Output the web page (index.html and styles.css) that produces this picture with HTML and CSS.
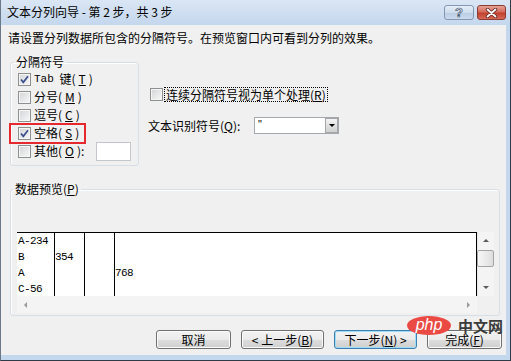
FILE: index.html
```html
<!DOCTYPE html>
<html lang="zh-CN">
<head>
    <meta charset="UTF-8">
    <meta name="viewport" content="width=device-width, initial-scale=1.0">
    <title>文本分列向导</title>
    <link rel="stylesheet" href="styles.css">
</head>
<body>

    <div class="window">
        <!-- Title bar -->
        <div class="titlebar">
            <span class="title">文本分列向导 - 第 2 步，共 3 步</span>
            <div class="caption-buttons">
                <span class="cap-btn help">?</span>
                <span class="cap-btn close">
                    <svg width="13" height="10" viewBox="0 0 13 10">
                        <path d="M2.5 1.5 L10.5 8.5 M10.5 1.5 L2.5 8.5" stroke="#5a2420" stroke-width="3.4" stroke-linecap="round" fill="none"/>
                        <path d="M2.5 1.5 L10.5 8.5 M10.5 1.5 L2.5 8.5" stroke="#fff" stroke-width="1.8" stroke-linecap="round" fill="none"/>
                    </svg>
                </span>
            </div>
        </div>

        <div class="client">
            <p class="intro">请设置分列数据所包含的分隔符号。在预览窗口内可看到分列的效果。</p>

            <div class="options">
                <fieldset class="group delimiters">
                    <legend>分隔符号</legend>
                    <div class="check-row"><span class="box checked"><svg width="11" height="11" viewBox="0 0 11 11"><path d="M2 5.5 L4.3 8.3 L9 2.3" stroke="#3b4f8d" stroke-width="1.7" fill="none"/></svg></span><span class="mono">Tab</span>&nbsp;键(<u>T</u>)</div>
                    <div class="check-row"><span class="box"></span>分号(<u>M</u>)</div>
                    <div class="check-row"><span class="box"></span>逗号(<u>C</u>)</div>
                    <div class="check-row highlight"><span class="box checked"><svg width="11" height="11" viewBox="0 0 11 11"><path d="M2 5.5 L4.3 8.3 L9 2.3" stroke="#3b4f8d" stroke-width="1.7" fill="none"/></svg></span>空格(<u>S</u>)</div>
                    <div class="check-row"><span class="box"></span>其他(<u>O</u>):<span class="other-input"></span></div>
                </fieldset>

                <div class="side">
                    <div class="check-row"><span class="box"></span><span class="focus">连续分隔符号视为单个处理(<u>R</u>)</span></div>
                    <div class="qualifier">
                        <span class="qualifier-label">文本识别符号(<u>Q</u>):</span>
                        <div class="combo">
                            <span class="combo-value">"</span>
                            <span class="combo-btn"><span class="tri-down"></span></span>
                        </div>
                    </div>
                </div>
            </div>

            <fieldset class="group preview-group">
                <legend>数据预览(<u>P</u>)</legend>
                <div class="preview">
                    <div class="data">
                        <div class="col c1"><div>A-234</div><div>B</div><div>A</div><div>C-56</div></div>
                        <div class="col c2"><div>&nbsp;</div><div>354</div></div>
                        <div class="col c3"></div>
                        <div class="col c4"><div>&nbsp;</div><div>&nbsp;</div><div>768</div></div>
                    </div>
                    <div class="vscroll">
                        <span class="arrow-btn"><span class="tri-up small"></span></span>
                        <span class="thumb"></span>
                        <span class="spacer"></span>
                        <span class="arrow-btn"><span class="tri-down small"></span></span>
                    </div>
                    <div class="hscroll">
                        <span class="arrow-btn"><span class="tri-left"></span></span>
                        <span class="arrow-btn"><span class="tri-right"></span></span>
                    </div>
                    <div class="corner"></div>
                </div>
            </fieldset>

            <div class="buttons">
                <button class="btn narrow">取消</button>
                <button class="btn wide">&lt; 上一步(<u>B</u>)</button>
                <button class="btn wide default">下一步(<u>N</u>) &gt;</button>
                <button class="btn narrow">完成(<u>F</u>)</button>
            </div>
        </div>

        <!-- Site watermark over the dialog -->
        <div class="watermark">
            <span class="wm-logo">php</span>
            <span class="wm-text">中文网</span>
        </div>
    </div>

</body>
</html>
```

FILE: styles.css
```css
/* Page */
body {
    margin: 0;
    background: #fff;
    font-family: "Noto Sans CJK SC", "Liberation Sans", sans-serif;
    font-size: 12px;
    color: #000;
}

/* Dialog frame */
.window {
    position: relative;
    width: 511px;
    height: 361px;
    box-sizing: border-box;
    display: flex;
    flex-direction: column;
    background: #c3d7ed;
    border-left: 1px solid #6a7888;
    border-right: 1px solid #2f3b47;
    border-bottom: 1px solid #2f3b47;
    padding: 0 4px 5px 0;
}

/* Title bar */
.titlebar {
    height: 25px;
    flex: none;
    display: flex;
    align-items: flex-start;
    margin-right: -4px;
    padding-left: 6px;
    background: linear-gradient(#dae6f4, #c4d7ed);
}

.title {
    margin-top: 5px;
    line-height: 14px;
}

.caption-buttons {
    margin-left: auto;
    margin-top: 5px;
    padding-right: 4px;
    display: flex;
    gap: 3px;
}

.cap-btn {
    height: 15px;
    box-sizing: border-box;
    border-radius: 3px;
    display: flex;
    align-items: center;
    justify-content: center;
}

.help {
    width: 30px;
    border: 1px solid #8497b0;
    background: linear-gradient(#e6eef8, #cddcee 50%, #b9cbe3 51%, #cbdaee);
    font-family: "Liberation Sans", sans-serif;
    font-weight: bold;
    font-size: 13px;
    color: #eef3f9;
    -webkit-text-stroke: 0.7px #3f5068;
}

.close {
    width: 29px;
    border: 1px solid #8b3b34;
    background: linear-gradient(#e7a395, #d46b5c 45%, #c2402f 55%, #d66a55);
}

/* Client area */
.client {
    flex: 1;
    display: flex;
    flex-direction: column;
    background: #f0f0f0;
    padding: 0 4px 0 7px;
}

.intro {
    margin: 6px 0 0;
    line-height: 14px;
}

.options {
    display: flex;
    align-items: flex-start;
    margin-top: 10px;
}

/* Group boxes */
.group {
    margin: 0 0 0 2px;
    border: 1px solid #d5dfe5;
    border-radius: 3px;
    box-shadow: inset 1px 1px 0 #fff;
    min-width: 0;
}

.group legend {
    padding: 0 2px;
    margin-left: -4px;
    line-height: 14px;
}

.delimiters {
    width: 129px;
    box-sizing: border-box;
    padding: 1px 7px 5px 7px;
}

/* Checkbox rows */
.check-row {
    position: relative;
    display: flex;
    align-items: center;
    gap: 3px;
    height: 18px;
    line-height: 14px;
}

.mono {
    font-family: "Liberation Mono", monospace;
    font-size: 11px;
}

.box {
    flex: none;
    width: 13px;
    height: 13px;
    box-sizing: border-box;
    border: 1px solid #8e8f8f;
    background: linear-gradient(135deg, #d2d4d7, #f8f8f8);
    box-shadow: inset 0 0 0 1px #f6f6f6;
    display: flex;
    align-items: center;
    justify-content: center;
}

.highlight::after {
    content: "";
    position: absolute;
    left: -9px;
    top: -1px;
    width: 77px;
    height: 21px;
    box-sizing: border-box;
    border: 2px solid #e5292e;
}

.other-input {
    margin-left: auto;
    width: 35px;
    height: 19px;
    box-sizing: border-box;
    border: 1px solid #c3c6cb;
    background: #fff;
}

/* Right column */
.side {
    margin-left: 9px;
    padding-top: 31px;
}

.side .check-row {
    height: 17px;
    gap: 1px;
    padding-left: 2px;
}

.focus {
    border: 1px dotted #000;
    padding: 0 1px;
    line-height: 13px;
}

.qualifier {
    display: flex;
    align-items: center;
    margin-top: 14px;
}

.qualifier-label {
    width: 106px;
    line-height: 14px;
}

.combo {
    width: 85px;
    height: 17px;
    box-sizing: border-box;
    border: 1px solid #a3a7ae;
    background: #fff;
    display: flex;
}

.combo-value {
    flex: 1;
    padding-left: 3px;
    font-family: "Liberation Sans", sans-serif;
    font-size: 11px;
    line-height: 12px;
    color: #000;
}

.combo-btn {
    width: 11px;
    border: 1px solid #a6a6a6;
    background: linear-gradient(#f4f4f4, #e0e0e0 50%, #d0d0d0);
    display: flex;
    align-items: center;
    justify-content: center;
}

/* Triangles */
.tri-down {
    border-left: 3px solid transparent;
    border-right: 3px solid transparent;
    border-top: 3px solid #000;
}

.tri-down.small {
    border-top-color: #5a5a5a;
}

.tri-up {
    border-left: 3px solid transparent;
    border-right: 3px solid transparent;
    border-bottom: 3px solid #5a5a5a;
}

.tri-left {
    border-top: 3px solid transparent;
    border-bottom: 3px solid transparent;
    border-right: 3px solid #9a9a9a;
}

.tri-right {
    border-top: 3px solid transparent;
    border-bottom: 3px solid transparent;
    border-left: 3px solid #9a9a9a;
}

/* Data preview */
.preview-group {
    margin: 16px 2px 0 2px;
    padding: 36px 5px 2px 6px;
}

.preview {
    display: grid;
    grid-template-columns: 1fr 17px;
    grid-template-rows: 64px 17px;
}

.data {
    display: flex;
    overflow: hidden;
    background: #fff;
    border-top: 1px solid #000;
    border-right: 1px solid #000;
    font-family: "Liberation Mono", monospace;
    font-size: 11px;
    letter-spacing: -0.6px;
    line-height: 16px;
}

.col {
    box-sizing: border-box;
    border-right: 1px solid #000;
}

.c1 {
    width: 38px;
    padding-left: 1px;
}

.c2,
.c3 {
    width: 30px;
}

.c4 {
    flex: 1;
    border-right: none;
}

.vscroll {
    display: flex;
    flex-direction: column;
    background: #f4f4f4;
    box-shadow: inset 1px 0 0 #e6e6e6;
}

.arrow-btn {
    flex: none;
    width: 17px;
    height: 17px;
    display: flex;
    align-items: center;
    justify-content: center;
}

.thumb {
    flex: none;
    height: 15px;
    margin: 1px 0 0 0;
    border: 1px solid #a4a4a4;
    border-radius: 2px;
    background: linear-gradient(90deg, #f7f7f7, #dedede);
}

.spacer {
    flex: 1;
}

.hscroll {
    display: flex;
    justify-content: space-between;
    background: #f4f4f4;
}

.corner {
    background: #f0f0f0;
}

/* Bottom buttons */
.buttons {
    display: flex;
    justify-content: flex-end;
    gap: 10px;
    margin-top: 14px;
}

.btn {
    height: 19px;
    padding: 0;
    border: 1px solid #707070;
    border-radius: 3px;
    background: linear-gradient(#f2f2f2, #ebebeb 50%, #dddddd 51%, #cfcfcf);
    box-shadow: inset 0 0 0 1px #fbfbfb;
    font-family: inherit;
    font-size: 12px;
    line-height: 15px;
    color: #000;
}

.narrow {
    width: 75px;
}

.wide {
    width: 83px;
}

.default {
    border-color: #3c7fb1;
    box-shadow: inset 0 0 0 1px #9fdcf6;
}

/* Watermark */
.watermark {
    position: absolute;
    left: 406px;
    top: 316px;
    display: flex;
    align-items: center;
    gap: 7px;
}

.wm-logo {
    width: 44px;
    height: 19px;
    border-radius: 50%;
    background: #ea4a43;
    color: #fff;
    font-family: "Liberation Sans", sans-serif;
    font-style: italic;
    font-size: 16px;
    line-height: 18px;
    text-align: center;
}

.wm-text {
    font-size: 15px;
    font-weight: bold;
    line-height: 15px;
    color: #3b3b3b;
}
```
